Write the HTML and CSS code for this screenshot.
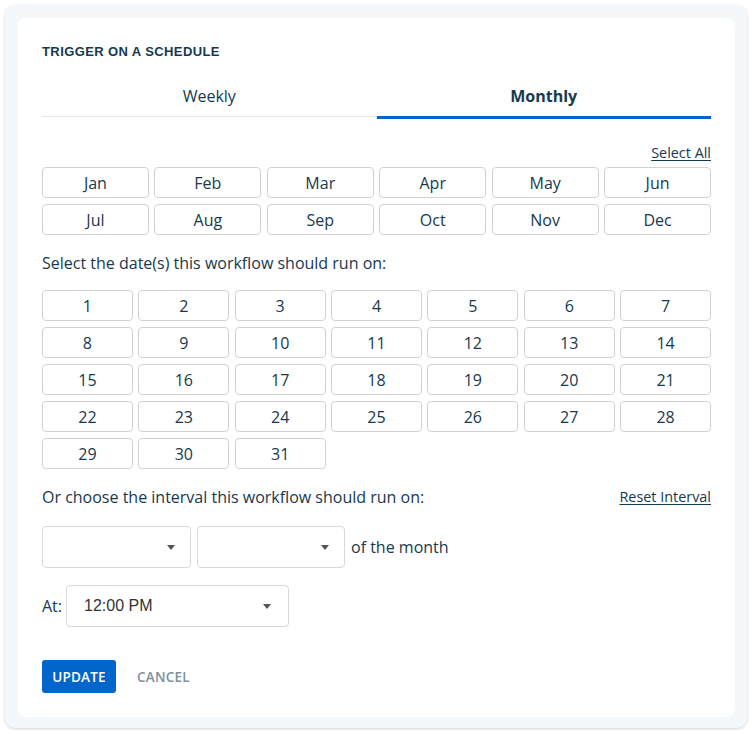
FILE: index.html
```html
<!DOCTYPE html>
<html>
<head>
<meta charset="utf-8">
<link rel="stylesheet" href="styles.css">
</head>
<body>
<div class="outer">
  <div class="card">
    <div class="heading">TRIGGER ON A SCHEDULE</div>
    <div class="tabs">
      <div class="tab">Weekly</div>
      <div class="tab active">Monthly</div>
    </div>
    <div class="link-row"><span class="link">Select All</span></div>
    <div class="months">
      <div class="btn">Jan</div><div class="btn">Feb</div><div class="btn">Mar</div><div class="btn">Apr</div><div class="btn">May</div><div class="btn">Jun</div>
      <div class="btn">Jul</div><div class="btn">Aug</div><div class="btn">Sep</div><div class="btn">Oct</div><div class="btn">Nov</div><div class="btn">Dec</div>
    </div>
    <div class="label dates-label">Select the date(s) this workflow should run on:</div>
    <div class="dates">
      <div class="btn">1</div><div class="btn">2</div><div class="btn">3</div><div class="btn">4</div><div class="btn">5</div><div class="btn">6</div><div class="btn">7</div>
      <div class="btn">8</div><div class="btn">9</div><div class="btn">10</div><div class="btn">11</div><div class="btn">12</div><div class="btn">13</div><div class="btn">14</div>
      <div class="btn">15</div><div class="btn">16</div><div class="btn">17</div><div class="btn">18</div><div class="btn">19</div><div class="btn">20</div><div class="btn">21</div>
      <div class="btn">22</div><div class="btn">23</div><div class="btn">24</div><div class="btn">25</div><div class="btn">26</div><div class="btn">27</div><div class="btn">28</div>
      <div class="btn">29</div><div class="btn">30</div><div class="btn">31</div>
    </div>
    <div class="interval-row">
      <span class="label">Or choose the interval this workflow should run on:</span>
      <span class="link">Reset Interval</span>
    </div>
    <div class="select-row">
      <div class="select s1"><span class="value"></span><span class="caret"></span></div>
      <div class="select s2"><span class="value"></span><span class="caret"></span></div>
      <span class="label">of the month</span>
    </div>
    <div class="at-row">
      <span class="label">At:</span>
      <div class="select s3"><span class="value">12:00 PM</span><span class="caret"></span></div>
    </div>
    <div class="actions">
      <div class="primary">UPDATE</div>
      <div class="secondary">CANCEL</div>
    </div>
  </div>
</div>
</body>
</html>
```
FILE: styles.css
```css
* { box-sizing: border-box; }
html, body { margin: 0; padding: 0; background: #ffffff; }
body {
  font-family: "Open Sans", "Liberation Sans", sans-serif;
  color: #17394d;
}
.outer {
  margin: 5px;
  width: 742px;
  height: 723px;
  background: #f4f8fb;
  border-radius: 10px;
  box-shadow: 0 1px 3px rgba(0, 0, 0, 0.18);
  padding: 13px 12px 11px 13px;
}
.card {
  background: #ffffff;
  border-radius: 8px;
  height: 100%;
  padding: 26px 24px 24px 24px;
}
.heading {
  font-family: "Liberation Sans", Arial, sans-serif;
  font-weight: 700;
  font-size: 13px;
  letter-spacing: 0.4px;
  line-height: 16px;
  color: #143a4f;
}
.tabs {
  display: flex;
  align-items: flex-start;
  margin-top: 16px;
}
.tab {
  flex: 1;
  text-align: center;
  font-size: 16px;
  line-height: 24px;
  padding: 8px 0;
  border-bottom: 1px solid #e3e7ea;
}
.tab.active {
  font-weight: 700;
  border-bottom: 3px solid #0066cc;
}
.link-row {
  display: flex;
  justify-content: flex-end;
  margin-top: 24px;
  margin-bottom: 4px;
}
.link {
  font-size: 14.4px;
  line-height: 20px;
  text-decoration: underline;
  text-underline-offset: 2px;
  color: #17394d;
}
.months {
  display: grid;
  grid-template-columns: repeat(6, 1fr);
  gap: 6px 5.6px;
}
.dates {
  display: grid;
  grid-template-columns: repeat(7, 1fr);
  gap: 6px 5.5px;
}
.btn {
  height: 31px;
  border: 1px solid #cfd3d6;
  border-radius: 4px;
  display: flex;
  align-items: center;
  justify-content: center;
  font-size: 16px;
  color: #17394d;
}
.label {
  font-size: 16px;
  line-height: 24px;
  color: #17394d;
}
.dates-label {
  margin-top: 16px;
  margin-bottom: 15px;
}
.interval-row {
  display: flex;
  justify-content: space-between;
  align-items: center;
  margin-top: 16px;
}
.select-row {
  display: flex;
  align-items: center;
  gap: 6px;
  margin-top: 17px;
}
.select {
  height: 42px;
  border: 1px solid #d6d9dc;
  border-radius: 4px;
  display: flex;
  align-items: center;
  justify-content: space-between;
  padding: 0 15px 0 17px;
}
.s1 { width: 149px; }
.s2 { width: 148px; }
.s3 { width: 223px; padding-right: 17px; }
.value {
  font-family: "Liberation Sans", Arial, sans-serif;
  font-size: 16px;
  color: #333333;
}
.caret {
  width: 0;
  height: 0;
  border-left: 4.5px solid transparent;
  border-right: 4.5px solid transparent;
  border-top: 5px solid #555555;
}
.at-row {
  display: flex;
  align-items: center;
  gap: 4px;
  margin-top: 17px;
}
.actions {
  display: flex;
  align-items: center;
  gap: 21px;
  margin-top: 33px;
}
.primary {
  width: 74px;
  height: 33px;
  background: #0066cc;
  color: #ffffff;
  border-radius: 3px;
  display: flex;
  align-items: center;
  justify-content: center;
  font-size: 13.5px;
  font-weight: 600;
  letter-spacing: 0.2px;
}
.secondary {
  color: #7d909c;
  font-size: 13.5px;
  font-weight: 600;
  letter-spacing: 0.2px;
}
```
